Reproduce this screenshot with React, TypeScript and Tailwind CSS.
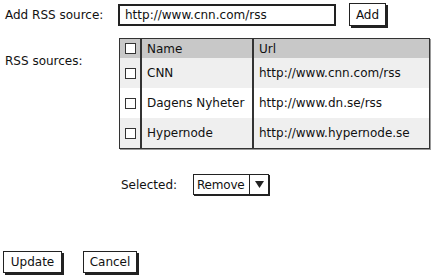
import React from 'react';

const rows = [
  { name: 'CNN', url: 'http://www.cnn.com/rss', bg: 'bg-[#efefef]' },
  { name: 'Dagens Nyheter', url: 'http://www.dn.se/rss', bg: 'bg-white' },
  { name: 'Hypernode', url: 'http://www.hypernode.se', bg: 'bg-[#efefef]' },
];

const Check = () => (
  <span className="block w-[11px] h-[11px] border-[1.5px] border-[#333] bg-white" />
);

const SketchButton: React.FC<{ label: string; className?: string }> = ({ label, className }) => (
  <button
    className={`h-[22px] border-[1.5px] border-[#222] bg-white text-[12px] text-[#111] shadow-[2px_2px_0_#222] ${className ?? ''}`}
  >
    {label}
  </button>
);

export default function App() {
  return (
    <div
      className="w-[432px] h-[278px] bg-white text-[#111] text-[12px] flex flex-col"
      style={{ fontFamily: '"DejaVu Sans", "Open Sans", sans-serif' }}
    >
      <div className="flex items-center pt-[3px]">
        <span className="w-[118px] pl-[5px]">Add RSS source:</span>
        <div className="w-[218px] h-[22px] border-2 border-[#222] flex items-center pl-[5px]">
          http://www.cnn.com/rss
        </div>
        <SketchButton label="Add" className="ml-[13px] w-[37px] h-[23px]" />
      </div>

      <div className="flex mt-[12px]">
        <span className="w-[119px] pl-[5px] pt-[14px]">RSS sources:</span>
        <div className="w-[311px] border-[1.5px] border-[#333] shadow-[1px_1px_0_#999]">
          <div className="flex h-[19px] bg-[#c8c8c8] items-center">
            <div className="w-[22px] flex justify-center border-r-2 border-[#333] h-full items-center">
              <Check />
            </div>
            <div className="w-[112px] pl-[5px] border-r-2 border-[#333] h-full flex items-center">Name</div>
            <div className="flex-1 pl-[5px]">Url</div>
          </div>
          {rows.map((r) => (
            <div key={r.name} className={`flex h-[30px] items-center ${r.bg}`}>
              <div className="w-[22px] flex justify-center border-r-2 border-[#333] h-full items-center">
                <Check />
              </div>
              <div className="w-[112px] pl-[5px] border-r-2 border-[#333] h-full flex items-center">{r.name}</div>
              <div className="flex-1 pl-[5px]">{r.url}</div>
            </div>
          ))}
        </div>
      </div>

      <div className="flex items-center mt-[25px] pl-[121px]">
        <span className="w-[72px]">Selected:</span>
        <div className="flex h-[21px] border-[1.5px] border-[#222] shadow-[1px_1px_0_#222]">
          <div className="w-[56px] pl-[3px] flex items-center border-r-[1.5px] border-[#222] tracking-[-0.2px]">Remove</div>
          <div className="w-[18px] flex items-center justify-center">
            <svg width="9" height="7" viewBox="0 0 9 7">
              <path d="M0 0 L9 0 L4.5 7 Z" fill="#222" />
            </svg>
          </div>
        </div>
      </div>

      <div className="flex mt-auto mb-[5px] pl-[3px] gap-[21px]">
        <SketchButton label="Update" className="w-[59px]" />
        <SketchButton label="Cancel" className="w-[54px]" />
      </div>
    </div>
  );
}
